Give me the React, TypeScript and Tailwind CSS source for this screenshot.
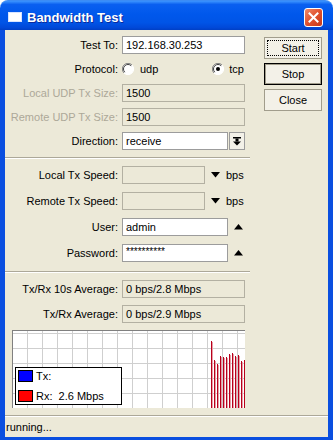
import React from 'react';

const font = "font-['Liberation_Sans',Arial,sans-serif]";

function Label({ text, disabled }: { text: string; disabled?: boolean }) {
  return (
    <div className={disabled ? 'w-[113px] text-right text-[#aca899]' : 'w-[113px] text-right text-black'}>
      {text}
    </div>
  );
}

function Field({ value, width, disabled }: { value: string; width: string; disabled?: boolean }) {
  return (
    <div
      className={
        (disabled
          ? 'border-[#b3b0a2] bg-[#ece9d8] '
          : 'border-[#9c9c9c] bg-white ') +
        width +
        ' flex h-[18px] items-center overflow-hidden border px-[3px] leading-none whitespace-nowrap'
      }
    >
      {value}
    </div>
  );
}

function Radio({ checked }: { checked?: boolean }) {
  return (
    <svg width="12" height="12" viewBox="0 0 12 12">
      <circle cx="6" cy="6" r="5.5" fill="white" />
      <path d="M10 2 A5.5 5.5 0 0 0 2 10" stroke="#808080" strokeWidth="1" fill="none" />
      <path d="M9.2 2.8 A4.5 4.5 0 0 0 2.8 9.2" stroke="#404040" strokeWidth="1" fill="none" />
      <path d="M2 10 A5.5 5.5 0 0 0 10 2" stroke="#ffffff" strokeWidth="1" fill="none" />
      {checked && <circle cx="6" cy="6" r="2" fill="black" />}
    </svg>
  );
}

function Separator() {
  return (
    <div className="w-[245px]">
      <div className="h-px bg-[#aca899]" />
      <div className="h-px bg-white" />
    </div>
  );
}

function DownTri() {
  return (
    <svg width="9" height="6" viewBox="0 0 9 6">
      <path d="M0 0 H9 L4.5 5.5 Z" fill="black" />
    </svg>
  );
}

function UpTri() {
  return (
    <svg width="9" height="6" viewBox="0 0 9 6">
      <path d="M0 5.5 H9 L4.5 0 Z" fill="black" />
    </svg>
  );
}

function Btn({ label, variant }: { label: string; variant: 'focus' | 'default' | 'plain' }) {
  if (variant === 'default') {
    return (
      <div className="h-[22px] w-[58px] border border-black bg-[#f3f1e8] p-0">
        <div className="flex h-full w-full items-center justify-center border border-[#a19d8c]">{label}</div>
      </div>
    );
  }
  return (
    <div className="h-[22px] w-[58px] border border-[#a19d8c] bg-[#f3f1e8] p-[2px]">
      <div
        className={
          variant === 'focus'
            ? 'flex h-full w-full items-center justify-center border border-dotted border-black'
            : 'flex h-full w-full items-center justify-center'
        }
      >
        {label}
      </div>
    </div>
  );
}

const bars = [11, 30, 34, 26, 27, 27, 24, 23, 26, 25, 31, 30];

function Graph() {
  const vlines = Array.from({ length: 15 }, (_, i) => 14 + i * 15);
  const hlines = [2, 17, 32, 47, 62];
  return (
    <div className="relative ml-[7px] h-[78px] w-[233px] border-t border-l border-[#808080] bg-white">
      <svg width="232" height="77" className="block">
        {vlines.map((x) => (
          <rect key={'v' + x} x={x} y={0} width={1} height={77} fill="#cfcfcf" />
        ))}
        {hlines.map((y) => (
          <rect key={'h' + y} x={0} y={y} width={232} height={1} fill="#cfcfcf" />
        ))}
        {bars.map((top, i) => (
          <g key={i}>
            <rect x={198 + i * 3} y={top - 1} width={1} height={78 - top} fill="#b8001c" />
            <rect x={199 + i * 3} y={top} width={1} height={77 - top} fill="#e7a0a8" />
          </g>
        ))}
      </svg>
      {/* legend sits over the chart */}
      <div className="absolute top-[36px] left-[2px] flex h-[38px] w-[107px] flex-col justify-center gap-[3px] border border-black bg-white pl-[2px]">
        <div className="flex items-center">
          <div className="h-[12px] w-[15px] border border-black bg-[#0000ff]" />
          <span className="ml-[3px]">Tx:</span>
        </div>
        <div className="flex items-center">
          <div className="h-[12px] w-[15px] border border-black bg-[#ff0000]" />
          <span className="ml-[3px] whitespace-pre">Rx:  2.6 Mbps</span>
        </div>
      </div>
    </div>
  );
}

export default function App() {
  return (
    <div className={`h-[440px] w-[333px] overflow-hidden bg-white text-[11px] text-black ${font}`}>
      <div className="flex h-[440px] w-[333px] flex-col">
        {/* title bar */}
        <div className="flex h-[30px] shrink-0 items-start rounded-t-[8px] border-t border-[#3c8cf5] bg-[linear-gradient(180deg,#3d95ff_0%,#0a5ff0_12%,#0058ec_45%,#0054e6_75%,#0048d8_92%,#003fc4_100%)]">
          <div className="mt-[11px] ml-[8px] h-[10px] w-[14px] border border-[#d8e4ff] bg-white" />
          <div className="mt-[7px] ml-[5px] font-['Liberation_Sans',Arial,sans-serif] text-[13px] font-bold text-white [text-shadow:1px_1px_0_#0a2a9c]">
            Bandwidth Test
          </div>
          <div className="mt-[7px] mr-[10px] ml-auto flex h-[19px] w-[19px] items-center justify-center rounded-[3px] border border-white bg-[linear-gradient(135deg,#f08a6a_0%,#e0512e_50%,#c5391a_100%)]">
            <svg width="11" height="11" viewBox="0 0 11 11">
              <path d="M1.5 1.5 L9.5 9.5 M9.5 1.5 L1.5 9.5" stroke="white" strokeWidth="2" strokeLinecap="square" />
            </svg>
          </div>
        </div>

        {/* window body */}
        <div className="flex h-[410px] border-x-[5px] border-b-[3px] border-[#0a4fe0]">
          <div className="flex h-full w-[323px] flex-col bg-[#ece9d8]">
            <div className="flex">
              {/* form column */}
              <div className="flex w-[245px] flex-col">
                <div className="mt-[6px] flex flex-col gap-[6px]">
                  <div className="flex h-[18px] items-center">
                    <Label text="Test To:" />
                    <div className="ml-[4px]">
                      <Field value="192.168.30.253" width="w-[123px]" />
                    </div>
                  </div>
                  <div className="flex h-[18px] items-center">
                    <Label text="Protocol:" />
                    <div className="ml-[4px] flex w-[123px] items-center">
                      <Radio />
                      <span className="ml-[6px]">udp</span>
                      <div className="ml-auto flex items-center">
                        <Radio checked />
                        <span className="ml-[5px] mr-[1px]">tcp</span>
                      </div>
                    </div>
                  </div>
                  <div className="flex h-[18px] items-center">
                    <Label text="Local UDP Tx Size:" disabled />
                    <div className="ml-[4px]">
                      <Field value="1500" width="w-[123px]" disabled />
                    </div>
                  </div>
                  <div className="flex h-[18px] items-center">
                    <Label text="Remote UDP Tx Size:" disabled />
                    <div className="ml-[4px]">
                      <Field value="1500" width="w-[123px]" disabled />
                    </div>
                  </div>
                  <div className="flex h-[18px] items-center">
                    <Label text="Direction:" />
                    <div className="ml-[4px] flex items-center">
                      <Field value="receive" width="w-[106px]" />
                      <div className="ml-[1px] flex h-[18px] w-[16px] items-center justify-center border border-[#9c9c9c] bg-[#f3f1e8]">
                        <svg width="8" height="9" viewBox="0 0 8 9">
                          <rect x="0" y="0" width="8" height="1.5" fill="black" />
                          <rect x="2.5" y="1.5" width="3" height="3" fill="black" />
                          <path d="M0 4.5 H8 L4 8.5 Z" fill="black" />
                        </svg>
                      </div>
                    </div>
                  </div>
                </div>

                <div className="mt-[7px]">
                  <Separator />
                </div>

                <div className="mt-[7px] flex flex-col gap-[8px]">
                  <div className="flex h-[18px] items-center">
                    <Label text="Local Tx Speed:" />
                    <div className="ml-[4px] flex items-center">
                      <Field value="" width="w-[83px]" disabled />
                      <div className="ml-[6px]">
                        <DownTri />
                      </div>
                      <span className="ml-[6px]">bps</span>
                    </div>
                  </div>
                  <div className="flex h-[18px] items-center">
                    <Label text="Remote Tx Speed:" />
                    <div className="ml-[4px] flex items-center">
                      <Field value="" width="w-[83px]" disabled />
                      <div className="ml-[6px]">
                        <DownTri />
                      </div>
                      <span className="ml-[6px]">bps</span>
                    </div>
                  </div>
                  <div className="flex h-[18px] items-center">
                    <Label text="User:" />
                    <div className="ml-[4px] flex items-center">
                      <Field value="admin" width="w-[106px]" />
                      <div className="ml-[6px]">
                        <UpTri />
                      </div>
                    </div>
                  </div>
                  <div className="flex h-[18px] items-center">
                    <Label text="Password:" />
                    <div className="ml-[4px] flex items-center">
                      <div className="flex h-[18px] w-[106px] items-start border border-[#9c9c9c] bg-white px-[3px] pt-[2px] text-[10px] leading-[10px]">
                        **********
                      </div>
                      <div className="ml-[6px]">
                        <UpTri />
                      </div>
                    </div>
                  </div>
                </div>

                <div className="mt-[9px]">
                  <Separator />
                </div>

                <div className="mt-[7px] flex flex-col gap-[7px]">
                  <div className="flex h-[18px] items-center">
                    <Label text="Tx/Rx 10s Average:" />
                    <div className="ml-[4px]">
                      <Field value="0 bps/2.8 Mbps" width="w-[123px]" disabled />
                    </div>
                  </div>
                  <div className="flex h-[18px] items-center">
                    <Label text="Tx/Rx Average:" />
                    <div className="ml-[4px]">
                      <Field value="0 bps/2.9 Mbps" width="w-[123px]" disabled />
                    </div>
                  </div>
                </div>

                <div className="mt-[7px]">
                  <Graph />
                </div>
              </div>

              {/* button column */}
              <div className="mt-[7px] ml-[14px] flex flex-col gap-[4px]">
                <Btn label="Start" variant="focus" />
                <Btn label="Stop" variant="default" />
                <Btn label="Close" variant="plain" />
              </div>
            </div>

            {/* status bar */}
            <div className="mt-[7px] flex flex-1 flex-col">
              <div className="h-px bg-[#aca899]" />
              <div className="h-px bg-white" />
              <div className="flex flex-1 items-center pl-[1px]">running...</div>
            </div>
          </div>
        </div>
      </div>
    </div>
  );
}
